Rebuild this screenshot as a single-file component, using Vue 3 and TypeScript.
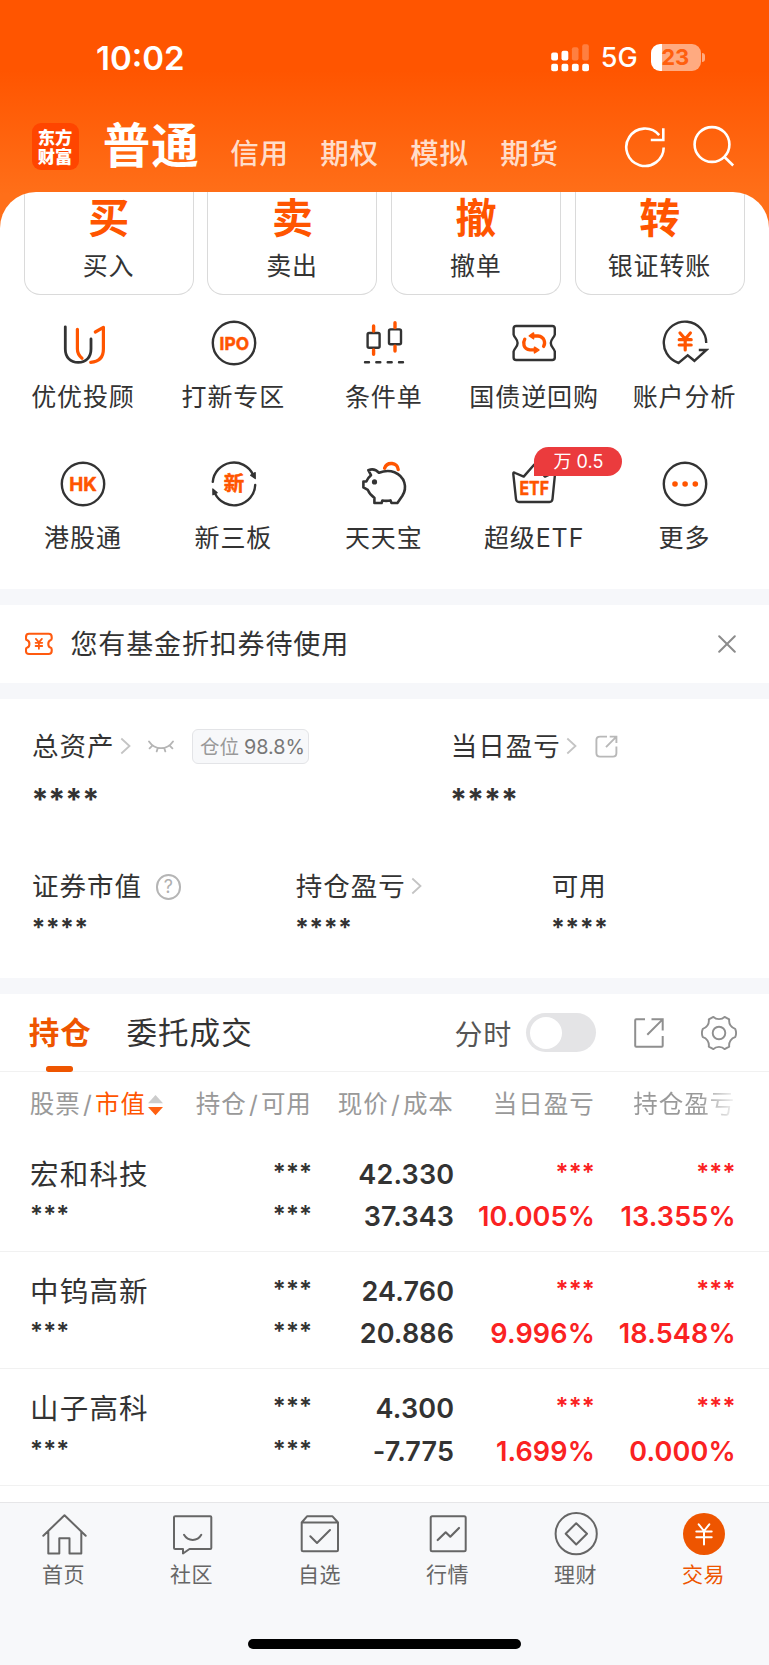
<script setup lang="ts">
interface Tool {
  id: string
  label: string
  badge?: string
}
interface Holding {
  name: string
  price: string
  cost: string
  day: string
  total: string
}

const accounts: string[] = ['信用', '期权', '模拟', '期货']
const actions: { glyph: string; label: string }[] = [
  { glyph: '买', label: '买入' },
  { glyph: '卖', label: '卖出' },
  { glyph: '撤', label: '撤单' },
  { glyph: '转', label: '银证转账' },
]
const tools: Tool[] = [
  { id: 'advisor', label: '优优投顾' },
  { id: 'ipo', label: '打新专区' },
  { id: 'condition', label: '条件单' },
  { id: 'repo', label: '国债逆回购' },
  { id: 'analysis', label: '账户分析' },
  { id: 'hk', label: '港股通' },
  { id: 'neeq', label: '新三板' },
  { id: 'piggy', label: '天天宝' },
  { id: 'etf', label: '超级ETF', badge: '万 0.5' },
  { id: 'more', label: '更多' },
]
const holdings: Holding[] = [
  { name: '宏和科技', price: '42.330', cost: '37.343', day: '10.005%', total: '13.355%' },
  { name: '中钨高新', price: '24.760', cost: '20.886', day: '9.996%', total: '18.548%' },
  { name: '山子高科', price: '4.300', cost: '-7.775', day: '1.699%', total: '0.000%' },
]
const tabs: { id: string; label: string }[] = [
  { id: 'home', label: '首页' },
  { id: 'community', label: '社区' },
  { id: 'watch', label: '自选' },
  { id: 'market', label: '行情' },
  { id: 'wealth', label: '理财' },
  { id: 'trade', label: '交易' },
]
</script>

<template>
  <div class="screen">
    <header class="top">
      <div class="status">
        <span class="clock">10:02</span>
        <div class="status-right">
          <svg class="signal" width="39" height="28" viewBox="0 0 39 28" fill="#fff">
            <rect x="0.2" y="8.5" width="6.8" height="8" rx="2" />
            <rect x="10.5" y="6.7" width="6.8" height="9.8" rx="2" />
            <rect x="20.9" y="3.3" width="6.6" height="13.2" rx="2" opacity=".25" />
            <rect x="31.2" y="0.3" width="6.6" height="16.2" rx="2" opacity=".25" />
            <rect x="0.2" y="19.8" width="6.8" height="7.4" rx="2" />
            <rect x="10.5" y="19.8" width="6.8" height="7.4" rx="2" />
            <rect x="20.9" y="19.8" width="6.8" height="7.4" rx="2" />
            <rect x="31.2" y="19.8" width="6.8" height="7.4" rx="2" />
          </svg>
          <span class="network">5G</span>
          <span class="battery"><span class="level">23</span></span>
          <span class="nub"></span>
        </div>
      </div>
      <div class="nav">
        <div class="logo"><span>东方</span><span>财富</span></div>
        <h1>普通</h1>
        <span v-for="a in accounts" :key="a" class="account">{{ a }}</span>
        <div class="nav-icons">
          <svg width="44" height="44" viewBox="0 0 44 44" fill="none" stroke="#fff" stroke-width="2.6">
            <path d="M40.7 22.5A18.7 18.7 0 1 1 36.2 10.1" />
            <path d="M40.3 3.2V15H27.8" />
          </svg>
          <svg width="44" height="44" viewBox="0 0 44 44" fill="none" stroke="#fff" stroke-width="2.6">
            <circle cx="20" cy="19.5" r="17.4" />
            <path d="M32 31.5L41.2 40.5" />
          </svg>
        </div>
      </div>
    </header>

    <main class="sheet">
      <section class="actions">
        <div v-for="a in actions" :key="a.label" class="action">
          <b>{{ a.glyph }}</b>
          <span>{{ a.label }}</span>
        </div>
      </section>

      <section class="tools">
        <div v-for="t in tools" :key="t.id" class="tool">
          <div class="tool-icon">
            <svg width="48" height="48" viewBox="0 0 48 48" fill="none" stroke="#333" stroke-width="2.4" stroke-linecap="round" stroke-linejoin="round">
              <template v-if="t.id === 'advisor'">
                <path d="M6.3 7.8V30C6.3 38.5 11.5 43.4 19.2 43.4S32 38.5 32 30V20" stroke-width="2.8" />
                <g stroke="#ff5500" stroke-width="3.2">
                  <path d="M18.4 10.3V30C18.4 34 20 36.8 23 39.2" />
                  <path d="M36.3 13L44.4 8.4V30C44.4 38 40 42.7 31.7 43.3" />
                </g>
              </template>
              <template v-else-if="t.id === 'ipo'">
                <circle cx="24" cy="24" r="21.2" />
                <text class="mark" x="24.3" y="30.5" font-size="18" textLength="29.5" lengthAdjust="spacingAndGlyphs">IPO</text>
              </template>
              <template v-else-if="t.id === 'condition'">
                <rect x="7.6" y="14" width="12" height="14.8" rx="1.5" />
                <rect x="29" y="10.4" width="12" height="14.8" rx="1.5" />
                <path d="M13.6 7V12M13.6 31V35.3M35 3.7V8.5M35 27.3V32" stroke="#ff5500" stroke-width="3.4" />
                <path d="M5 43.3H9M16.3 43.3H20.3M27.7 43.3H31.7M39 43.3H43" />
              </template>
              <template v-else-if="t.id === 'repo'">
                <path d="M6.2 7H42.2Q44.8 7 44.8 9.6V15.5C44 19 40.8 20 40.8 24S44 29 44.8 32.5V38.4Q44.8 41 42.2 41H6.2Q3.6 41 3.6 38.4V32.5C4.4 29 7.6 28 7.6 24S4.4 19 3.6 15.5V9.6Q3.6 7 6.2 7Z" />
                <g stroke="#ff5500" stroke-width="3.3">
                  <path d="M14.8 20.2C12.8 23.5 13 30.3 20 30.9H25" />
                  <path d="M33.6 27.4C35.6 24 34.8 17.8 28 17H23" />
                  <path d="M23.5 14L19.3 16.8L23.5 19.7ZM24.5 28.2L28.8 31L24.5 33.8Z" fill="#ff5500" stroke-width="1.6" />
                </g>
              </template>
              <template v-else-if="t.id === 'analysis'">
                <path d="M45.2 24A21.2 21.2 0 1 0 17.6 44L26.7 36.4L33.4 41.8L45.4 31H37.8" stroke-linecap="butt" stroke-linejoin="miter" />
                <path d="M19 14L24.2 20L29.4 14M24.2 20V31M18.2 20.7H30.2M18.2 26H30.2" stroke="#ff5500" stroke-width="3.2" />
              </template>
              <template v-else-if="t.id === 'hk'">
                <circle cx="24" cy="24" r="21.2" />
                <text class="mark" x="24" y="30.6" font-size="18.5" textLength="27.5" lengthAdjust="spacingAndGlyphs">HK</text>
              </template>
              <template v-else-if="t.id === 'neeq'">
                <path d="M2.8 21.8A21.2 21.2 0 0 1 43 14.5M45.2 25A21.2 21.2 0 0 1 5 33.5" />
                <path d="M40.6 15.2L45.3 18.6L45.2 12.6ZM7.2 32.6L2.8 29L2.9 34.8Z" fill="#333" stroke-width="1.2" />
                <text class="mark cn" x="24" y="31.3" font-size="20.5">新</text>
              </template>
              <template v-else-if="t.id === 'piggy'">
                <path d="M8.3 10.2C12.5 8.6 16.5 10 19 12.8C24 10.8 29.5 10.4 34.5 12.2C45 16.5 47.5 27.5 42.4 35.8L37.4 43H31.5L30.5 40.4C27.5 41 24.8 41 22.4 40.5L21.6 43H14.4V37.8C11 35.5 9 33 7.8 29.9L3.4 27.4V21.5H6.3C7.3 18.9 8.8 17 11 15.2Z" stroke-width="2.6" />
                <circle cx="14.5" cy="21.9" r="2.6" fill="#333" stroke="none" />
                <path d="M24.6 8.2C27 1.2 37.7 2.2 38.2 9.5" stroke="#ff5500" stroke-width="3.4" />
              </template>
              <template v-else-if="t.id === 'etf'">
                <path d="M3.3 14Q3 11.6 5.2 13L13.7 16.6L24.3 4.5L35 16.6L43 13Q45.5 11.8 45 14.2L42.5 39Q42.2 42 39.5 42H9Q6.3 42 6 39Z" />
                <text class="mark" x="24.2" y="34.8" font-size="18.5" textLength="29.5" lengthAdjust="spacingAndGlyphs">ETF</text>
              </template>
              <template v-else>
                <circle cx="24" cy="24" r="21.2" />
                <g fill="#ff5500" stroke="none">
                  <circle cx="14" cy="24" r="2.8" /><circle cx="24.1" cy="24" r="2.8" /><circle cx="34.3" cy="24" r="2.8" />
                </g>
              </template>
            </svg>
            <span v-if="t.badge" class="badge">{{ t.badge }}</span>
          </div>
          <span class="tool-label">{{ t.label }}</span>
        </div>
      </section>

      <section class="notice">
        <svg width="28" height="24" viewBox="0 0 28 24" fill="none" stroke="#ff5a0f" stroke-width="2.1" stroke-linecap="round" stroke-linejoin="round">
          <path d="M4 1.8H23.6Q26.7 1.8 26.7 5V6.5Q26.7 8 25.4 8.3Q23.3 9.2 23.3 12T25.4 15.6Q26.7 16 26.7 17.5V19Q26.7 22 23.6 22H4Q1 22 1 19V17.5Q1 16 2.3 15.6Q4.4 14.8 4.4 12T2.3 8.3Q1 8 1 6.5V5Q1 1.8 4 1.8Z" />
          <path d="M10.9 6.9L13.9 10.3L16.9 6.9M13.9 10.3V16.8M10.6 10.8H17.2M10.6 14H17.2" stroke-width="1.8" />
        </svg>
        <span>您有基金折扣券待使用</span>
        <svg class="close" width="18" height="18" viewBox="0 0 18 18" stroke="#8c8c8c" stroke-width="2" stroke-linecap="round">
          <path d="M1.2 1.2L16.8 16.8M16.8 1.2L1.2 16.8" />
        </svg>
      </section>

      <section class="assets">
        <div class="asset-row main-row">
          <div class="asset">
            <div class="asset-head">
              <span>总资产</span>
              <svg class="chev" width="11" height="18" viewBox="0 0 11 18"><path d="M1.3 1.5L9.5 9L1.3 16.5" /></svg>
              <svg class="eye" width="26" height="14" viewBox="0 0 26 14" fill="none" stroke="#b5b5b5" stroke-width="1.8" stroke-linecap="round">
                <path d="M1 1.5C7 10.4 19 10.4 25 1.5M4.6 5.4L1.6 8.4M9.8 8L8.7 11.4M16.2 8L17.3 11.4M21.4 5.4L24.4 8.4" />
              </svg>
              <span class="tag">仓位<em>98.8%</em></span>
            </div>
            <div class="mask big">****</div>
          </div>
          <div class="asset">
            <div class="asset-head">
              <span>当日盈亏</span>
              <svg class="chev" width="11" height="18" viewBox="0 0 11 18"><path d="M1.3 1.5L9.5 9L1.3 16.5" /></svg>
              <svg class="share" width="23" height="23" viewBox="0 0 23 23" fill="none" stroke="#b8b8b8" stroke-width="1.9">
                <path d="M12 1.6H5Q1.4 1.6 1.4 5V18Q1.4 21.6 5 21.6H18Q21.4 21.6 21.4 18V11.5" />
                <path d="M11 12.2L21.2 1.8M14.7 1.6H21.4V8" />
              </svg>
            </div>
            <div class="mask big">****</div>
          </div>
        </div>
        <div class="asset-row sub-row">
          <div class="asset">
            <div class="asset-head">
              <span>证券市值</span>
              <span class="help">?</span>
            </div>
            <div class="mask">****</div>
          </div>
          <div class="asset">
            <div class="asset-head">
              <span>持仓盈亏</span>
              <svg class="chev" width="11" height="18" viewBox="0 0 11 18"><path d="M1.3 1.5L9.5 9L1.3 16.5" /></svg>
            </div>
            <div class="mask">****</div>
          </div>
          <div class="asset">
            <div class="asset-head"><span>可用</span></div>
            <div class="mask">****</div>
          </div>
        </div>
      </section>

      <section class="positions">
        <div class="tabs">
          <span class="tab active">持仓</span>
          <span class="tab">委托成交</span>
          <span class="mode">分时</span>
          <span class="toggle"><i></i></span>
          <svg class="expand" width="30" height="30" viewBox="0 0 30 30" fill="none" stroke="#8f8f8f" stroke-width="2">
            <path d="M11 1.3H2.2Q1.2 1.3 1.2 2.3V27.8Q1.2 28.8 2.2 28.8H27.7Q28.7 28.8 28.7 27.8V18" />
            <path d="M13.3 16.8L28.4 1.6M17.5 1.3H28.7V12.5" />
          </svg>
          <svg class="gear" width="36" height="36" viewBox="0 0 36 36" fill="none" stroke="#8f8f8f" stroke-width="1.9" stroke-linejoin="round">
            <circle cx="18" cy="18" r="6.3" />
            <path d="M12.4 1.9C15 4.9 21 4.9 23.6 1.9L28.2 4.3C27.6 9.2 30.4 12.9 34.2 13.8Q36 18 34.2 22.2C30.4 23.1 27.6 26.8 28.2 31.7L23.6 34.1C21 31.1 15 31.1 12.4 34.1L7.8 31.7C8.4 26.8 5.6 23.1 1.8 22.2Q0 18 1.8 13.8C5.6 12.9 8.4 9.2 7.8 4.3Z" />
          </svg>
        </div>
        <div class="grid head">
          <span class="first">股票<u>/</u><b>市值</b>
            <svg width="15" height="21" viewBox="0 0 15 21"><path d="M7.5 0L15 8.3H0Z" fill="#ccc" /><path d="M7.5 20.3L0 12H15Z" fill="#ff6010" /></svg>
          </span>
          <span>持仓<u>/</u>可用</span>
          <span>现价<u>/</u>成本</span>
          <span>当日盈亏</span>
          <span class="fade">持仓盈亏</span>
        </div>
        <div v-for="h in holdings" :key="h.name" class="grid row">
          <span class="name">{{ h.name }}</span>
          <span class="stars">***</span>
          <span class="num">{{ h.price }}</span>
          <span class="stars up">***</span>
          <span class="stars up">***</span>
          <span class="stars left">***</span>
          <span class="stars">***</span>
          <span class="num">{{ h.cost }}</span>
          <span class="num up">{{ h.day }}</span>
          <span class="num up">{{ h.total }}</span>
        </div>
      </section>
    </main>

    <footer class="bottom">
      <nav class="tabbar">
        <div v-for="t in tabs" :key="t.id" class="item" :class="{ on: t.id === 'trade' }">
          <svg width="46" height="44" viewBox="0 0 46 44" fill="none" stroke="#666" stroke-width="2" stroke-linejoin="round" stroke-linecap="round">
            <path v-if="t.id === 'home'" d="M2.3 23.7L23.5 3.3L44.7 23.7M7.3 19.3V41.5H18.3V26.3H28.5V41.5H40.3V19.3" />
            <template v-else-if="t.id === 'community'">
              <path d="M6.3 4.3H41.3Q42.3 4.3 42.3 5.3V36Q42.3 37 41.3 37H20.5L14 41.5V37H6.3Q5 37 5 36V5.3Q5 4.3 6.3 4.3Z" />
              <path d="M15 22.8C19 29.6 28.5 29.6 32.3 22.8" />
            </template>
            <template v-else-if="t.id === 'watch'">
              <path d="M4.7 10.5L10 4.3H35.5L41 10.5V37.8Q41 39.3 39.5 39.3H6.2Q4.7 39.3 4.7 37.8ZM4.7 10.5H41" />
              <path d="M13.3 24.3L20 31L33 18" />
            </template>
            <template v-else-if="t.id === 'market'">
              <rect x="5.7" y="4.3" width="35" height="35" rx="1.5" />
              <path d="M12.7 28L20.7 20.3L25.3 24.7L34 16" stroke-width="2.2" />
            </template>
            <template v-else-if="t.id === 'wealth'">
              <circle cx="23.2" cy="21.7" r="20.6" />
              <path d="M23.2 11.2L34 21.7L23.2 32.5L12.7 21.7Z" />
            </template>
            <template v-else>
              <circle cx="23" cy="22" r="21" fill="#ee5500" stroke="none" />
              <path d="M17.7 12.3L23 19L28.3 12.3M23 19V32.5M15.3 19.5H30.7M15.3 25.3H30.7" stroke="#fff" />
            </template>
          </svg>
          <span>{{ t.label }}</span>
        </div>
      </nav>
      <div class="home-bar"></div>
    </footer>
  </div>
</template>

<style>
body {
  margin: 0;
  background: #fff;
}
</style>

<style scoped>
* {
  box-sizing: border-box;
}
.screen {
  width: 769px;
  height: 1665px;
  overflow: hidden;
  display: flex;
  flex-direction: column;
  color: #333;
  font-family: Inter, 'Noto Sans CJK SC', sans-serif;
  background: linear-gradient(#ff5500 0, #ff5500 70px, #ff6f19 195px, #ff6f19 240px, #fff 240px);
}
.top {
  height: 191.5px;
  flex: none;
}
.status {
  height: 87px;
  padding: 28px 64px 0 96px;
  display: flex;
  justify-content: space-between;
  color: #fff;
}
.clock {
  font-size: 33px;
  font-weight: 600;
  line-height: 60px;
}
.status-right {
  display: flex;
  align-items: center;
  height: 59px;
}
.network {
  margin-left: 11px;
  width: 50.3px;
  font-size: 27px;
  font-weight: 500;
  line-height: 61px;
}
.battery {
  width: 49.5px;
  height: 27.5px;
  border-radius: 9px;
  background: linear-gradient(90deg, #fff 11.3px, rgba(255, 255, 255, 0.5) 11.3px);
  display: flex;
  justify-content: center;
  align-items: center;
}
.level {
  color: #ff5f0e;
  font-size: 22px;
  font-weight: 700;
  line-height: 27px;
  margin-left: -1px;
}
.nub {
  width: 3px;
  height: 9px;
  margin-left: 1.5px;
  border-radius: 0 5px 5px 0;
  background: rgba(255, 255, 255, 0.5);
}
.nav {
  height: 104px;
  padding-left: 31.5px;
  display: flex;
}
.logo {
  width: 47px;
  height: 47px;
  margin: 36px 25.3px 0 0;
  padding-top: 4.5px;
  border-radius: 9px;
  background: #ff4500;
  color: #fff;
  font-size: 17.3px;
  font-weight: 900;
  line-height: 19px;
  display: flex;
  flex-direction: column;
  align-items: center;
}
h1 {
  margin: 29px 27.5px 0 -1px;
  width: 100px;
  color: #fff;
  font-size: 47.5px;
  line-height: 60px;
  font-weight: 700;
  letter-spacing: 0.9px;
}
.account {
  width: 90px;
  margin-top: 46.5px;
  line-height: 40px;
  font-size: 28.5px;
  font-weight: 500;
  letter-spacing: 0.8px;
  color: rgba(255, 255, 255, 0.8);
}
.nav-icons {
  display: flex;
  gap: 25px;
  margin: 37.5px 0 0 32.5px;
}
.sheet {
  height: 1310.5px;
  flex: none;
  background: #fff;
  border-radius: 36px 36px 0 0;
  overflow: hidden;
}
.actions {
  height: 103.5px;
  padding: 0 24.4px 0 23.8px;
  display: flex;
  gap: 13.8px;
}
.action {
  flex: 1;
  border: 1.3px solid #dadada;
  border-top: 0;
  border-radius: 0 0 16px 16px;
  display: flex;
  flex-direction: column;
  align-items: center;
}
.action b {
  color: #ff5500;
  font-size: 41px;
  font-weight: 600;
  line-height: 52px;
}
.action span {
  font-size: 25px;
  letter-spacing: 0.8px;
  line-height: 45px;
  margin-left: -0.6px;
}
.tools {
  height: 294.3px;
  padding: 24.3px 8.1px 0;
  display: grid;
  grid-template-columns: repeat(5, 150.4px);
  grid-auto-rows: 140.7px;
}
.tool {
  display: flex;
  flex-direction: column;
  align-items: center;
}
.tool-icon {
  position: relative;
  width: 48px;
  height: 48px;
}
.tool-icon svg {
  display: block;
}
.mark {
  fill: #ff5500;
  stroke: #ff5500;
  stroke-width: 0.5;
  font-family: Inter, sans-serif;
  font-weight: 700;
  text-anchor: middle;
}
.mark.cn {
  font-family: 'Noto Sans CJK SC', sans-serif;
  font-weight: 700;
}
.badge {
  position: absolute;
  left: 24px;
  top: -13px;
  width: 88px;
  height: 29px;
  border-radius: 14.5px 14.5px 14.5px 0;
  background: #eb3b3d;
  color: #fff;
  font-size: 18px;
  line-height: 29.5px;
  text-align: center;
  white-space: nowrap;
}
.tool-label {
  margin: 10px 0 0 -0.7px;
  font-size: 25px;
  letter-spacing: 0.9px;
  line-height: 41px;
  white-space: nowrap;
}
.notice {
  height: 109.7px;
  border-top: 16px solid #f6f7fa;
  border-bottom: 16px solid #f6f7fa;
  padding: 0 33.5px 0 25.3px;
  display: flex;
  align-items: center;
}
.notice span {
  margin: 2px 0 0 17.2px;
  flex: 1;
  font-size: 27px;
  letter-spacing: 0.85px;
  line-height: 40px;
}
.assets {
  height: 279.3px;
  padding: 27px 0 0 32px;
}
.asset-row {
  display: grid;
}
.main-row {
  grid-template-columns: 418.7px 1fr;
  height: 140.5px;
}
.sub-row {
  grid-template-columns: 263.7px 256px 1fr;
}
.asset-head {
  height: 40px;
  display: flex;
  align-items: center;
  font-size: 26.5px;
  letter-spacing: 1px;
  line-height: 40px;
}
.chev {
  margin-left: 5px;
  fill: none;
  stroke: #c4c4c4;
  stroke-width: 1.8;
}
.eye {
  margin: 2px 0 0 17px;
}
.share {
  margin: 2px 0 0 18px;
}
.tag {
  width: 117.5px;
  height: 35px;
  margin: 1px 0 0 18px;
  border: 1.3px solid #e3e4e7;
  border-radius: 6px;
  background: #f7f8fa;
  padding-left: 7.5px;
  font-size: 19.5px;
  letter-spacing: 0;
  line-height: 35px;
  color: #999;
  display: flex;
}
.tag em {
  font-style: normal;
  color: #777;
  margin-left: 5px;
  font-size: 19.8px;
}
.help {
  width: 25.5px;
  height: 25.5px;
  margin: 1px 0 0 13.7px;
  border: 2px solid #b5b5b5;
  border-radius: 50%;
  color: #b0b0b0;
  font-size: 18px;
  line-height: 22px;
  letter-spacing: 0;
  text-align: center;
}
.mask {
  font-size: 25px;
  font-weight: 700;
  line-height: 30px;
  margin-top: 6.5px;
  margin-left: -0.6px;
  letter-spacing: 0.3px;
}
.mask.big {
  font-size: 30.5px;
  line-height: 36px;
  margin-top: 15px;
  letter-spacing: -0.1px;
}
.positions {
  border-top: 16px solid #f6f7fa;
}
.tabs {
  height: 78px;
  padding: 0 32px 0 28.7px;
  border-bottom: 1.3px solid #f1f1f1;
  display: flex;
  align-items: center;
}
.tab {
  font-size: 30.5px;
  letter-spacing: 1.1px;
  line-height: 78px;
}
.tab + .tab {
  margin-left: 34.5px;
}
.tab.active {
  position: relative;
  color: #ee5500;
  font-weight: 700;
}
.tab.active::after {
  content: '';
  position: absolute;
  left: 17.3px;
  bottom: 0;
  width: 27px;
  height: 5.5px;
  border-radius: 2.7px;
  background: #ee5500;
}
.mode {
  margin-left: auto;
  font-size: 28px;
  letter-spacing: 0.8px;
  color: #555;
}
.toggle {
  width: 70px;
  height: 39px;
  margin-left: 14px;
  border-radius: 20px;
  background: #e4e4e6;
  padding: 3.5px;
}
.toggle i {
  display: block;
  width: 32px;
  height: 32px;
  border-radius: 50%;
  background: #fff;
}
.expand {
  margin-left: 38px;
}
.gear {
  margin-left: 37px;
}
.grid {
  display: grid;
  grid-template-columns: 140px 142.2px 142px 140.8px 140.7px;
  padding-left: 29.7px;
}
.grid > span {
  text-align: right;
  white-space: nowrap;
}
.head {
  height: 62px;
  line-height: 65px;
  font-size: 24.5px;
  letter-spacing: 1px;
  color: #999;
}
.head u {
  text-decoration: none;
  margin: 0 2px 0 2.4px;
}
.grid > .first {
  display: flex;
  align-items: center;
}
.first b {
  font-weight: 400;
  color: #ff5500;
}
.first svg {
  flex: none;
  margin: 2px 0 0 2px;
}
.fade {
  background: linear-gradient(90deg, #999 75%, rgba(153, 153, 153, 0.1) 100%);
  background-clip: text;
  -webkit-background-clip: text;
  color: transparent;
}
.row {
  height: 117.4px;
  padding: 19.3px 0 0 30px;
  grid-template-rows: 42.4px 42.4px;
  line-height: 42.4px;
  border-bottom: 1.3px solid #f1f1f1;
}
.grid > .name,
.grid > .left {
  text-align: left;
}
.name {
  font-size: 28.5px;
  letter-spacing: 1.2px;
}
.num {
  font-size: 27px;
  font-weight: 600;
  letter-spacing: 0.15px;
}
.stars {
  font-size: 24px;
  font-weight: 600;
  letter-spacing: 0.2px;
  line-height: 38.4px;
}
.up {
  color: #fa2222;
}
.bottom {
  height: 163px;
  flex: none;
  border-top: 1.5px solid #e6e6e8;
  background: #f7f8fa;
}
.tabbar {
  display: grid;
  grid-template-columns: repeat(6, 128px);
  padding-top: 9px;
}
.item {
  display: flex;
  flex-direction: column;
  align-items: center;
  color: #666;
  font-size: 21px;
  letter-spacing: 0.6px;
}
.item span {
  line-height: 30px;
  margin: 4px 0 0 -1px;
}
.item.on {
  color: #ee5500;
}
.home-bar {
  width: 273.5px;
  height: 10px;
  margin: 49px auto 0;
  border-radius: 5px;
  background: #000;
}
</style>
